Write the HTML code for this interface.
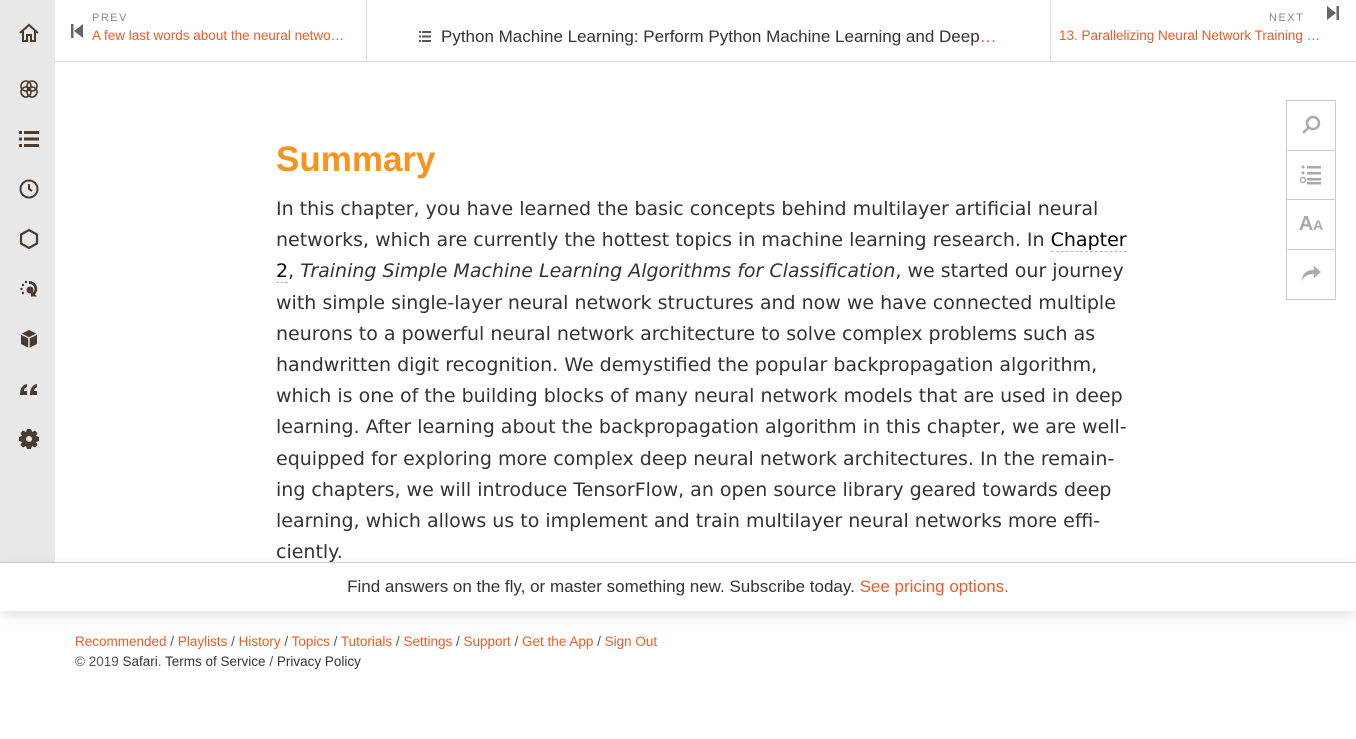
<!DOCTYPE html>
<html><head><meta charset="utf-8"><style>
*{margin:0;padding:0;box-sizing:border-box}
body{width:1356px;height:739px;overflow:hidden;background:#fff;font-family:"Liberation Sans",sans-serif;position:relative}
.side{position:absolute;left:0;top:0;width:55px;height:562px;background:#e8e8e8}
.side svg{position:absolute;left:18px;width:22px;height:22px}
.top{position:absolute;left:55px;top:0;right:0;height:62px;border-bottom:1px solid #ddd}
.prev{position:absolute;left:0;top:0;width:312px;height:61px;border-right:1px solid #ddd}
.next{position:absolute;right:0;top:0;width:306px;height:61px;border-left:1px solid #ddd}
.lbl{font-size:11px;letter-spacing:1.5px;color:#888}
.lnk{font-size:13.5px;color:#f15a24;white-space:nowrap}
.title{position:absolute;top:27px;font-size:17px;color:#333;white-space:nowrap}
.content{position:absolute;left:276px;top:140px;font-family:"DejaVu Sans",sans-serif;font-size:19px;line-height:31.2px;color:#333;white-space:nowrap}
h1{font-family:"Liberation Sans",sans-serif;font-weight:bold;color:#f7941d;font-size:35px;line-height:40px;margin-bottom:14px}
.tools{position:absolute;left:1286px;top:100px;width:50px;height:200px;border:1px solid #ccc;background:#fff}
.tools div{height:49.5px;border-bottom:1px solid #ccc;display:flex;align-items:center;justify-content:center;color:#aaa}
.tools div:last-child{border:none}
.banner{position:absolute;left:0;top:562px;width:1356px;height:49px;background:#fff;border-top:1px solid #ccc;box-shadow:0 4px 12px rgba(0,0,0,.12);text-align:center;font-size:17px;line-height:48px;color:#333}
.o{color:#f15a24}
.foot{position:absolute;left:75px;top:632px;font-size:13.5px;line-height:20px;color:#555}
.foot .o{color:#f15a24}
</style></head><body>
<div class="side">
<svg style="top:22px" viewBox="0 0 22 22" fill="none" stroke="#4a3b30" stroke-width="2"><path d="M2 11L11 3l9 8M5 9v10h4v-6h4v6h4V9"/></svg>
<svg style="top:78px" viewBox="0 0 22 22" fill="none" stroke="#4a3b30" stroke-width="1.6"><circle cx="8" cy="8" r="5"/><circle cx="14" cy="8" r="5"/><circle cx="8" cy="14" r="5"/><circle cx="14" cy="14" r="5"/></svg>
<svg style="top:128px" viewBox="0 0 22 22" fill="#4a3b30"><rect x="1" y="3" width="3" height="3"/><rect x="6" y="3" width="15" height="3"/><rect x="1" y="9.5" width="3" height="3"/><rect x="6" y="9.5" width="15" height="3"/><rect x="1" y="16" width="3" height="3"/><rect x="6" y="16" width="15" height="3"/></svg>
<svg style="top:178px" viewBox="0 0 22 22" fill="none" stroke="#4a3b30" stroke-width="2"><circle cx="11" cy="11" r="8.5"/><path d="M11 6v5l3 2"/></svg>
<svg style="top:228px" viewBox="0 0 22 22" fill="none" stroke="#4a3b30" stroke-width="2.2"><path d="M11 2l8 4.5v9L11 20l-8-4.5v-9z"/></svg>
<svg style="top:278px" viewBox="0 0 22 22" fill="#4a3b30"><circle cx="12" cy="12" r="3.5"/><path d="M11 3a8 8 0 0 1 6 13.5l2 2h-6v-6l2 2A5 5 0 0 0 11 6z"/><circle cx="5" cy="7" r="1.2"/><circle cx="3.5" cy="11" r="1.2"/><circle cx="5" cy="15" r="1.2"/><circle cx="8" cy="4" r="1.2"/></svg>
<svg style="top:328px" viewBox="0 0 22 22" fill="#4a3b30"><path d="M11 2l8 4v10l-8 4-8-4V6z"/><path d="M3 6l8 4 8-4M11 10v10" stroke="#e8e8e8" stroke-width="1.5" fill="none"/></svg>
<svg style="top:378px" viewBox="0 0 22 22" fill="#4a3b30"><path d="M2 17c0-6 2-10 7-11v3c-2 1-3 2-3 4h3v4zM12 17c0-6 2-10 7-11v3c-2 1-3 2-3 4h3v4z"/></svg>
<svg style="top:428px" viewBox="0 0 22 22" fill="#4a3b30"><path d="M9 1h4l1 3 3-1.5 2.5 2.5L18 8l3 1v4l-3 1 1.5 3-2.5 2.5L14 18l-1 3H9l-1-3-3 1.5L2.5 17 4 14l-3-1V9l3-1-1.5-3L5 2.5 8 4z"/><circle cx="11" cy="11" r="3" fill="#e8e8e8"/></svg>
</div>
<div class="top">
<div class="prev">
<svg style="position:absolute;left:16px;top:24px" width="12" height="14" viewBox="0 0 12 14" fill="#666"><rect x="0" y="0" width="2.5" height="14"/><path d="M12 0v14L3 7z"/></svg>
<div class="lbl" style="position:absolute;left:37px;top:12px">PREV</div>
<div class="lnk" style="position:absolute;left:37px;top:28px">A few last words about the neural netwo…</div>
</div>
<svg style="position:absolute;left:364px;top:31px" width="12" height="11" viewBox="0 0 12 11" fill="#555"><rect x="0" y="0" width="2" height="2"/><rect x="3" y="0" width="9" height="2"/><rect x="0" y="4.5" width="2" height="2"/><rect x="3" y="4.5" width="9" height="2"/><rect x="0" y="9" width="2" height="2"/><rect x="3" y="9" width="9" height="2"/></svg>
<div class="title" style="left:386px">Python Machine Learning: Perform Python Machine Learning and Deep<span class="o">…</span></div>
<div class="next">
<div class="lbl" style="position:absolute;left:218px;top:12px">NEXT</div>
<div class="lnk" style="position:absolute;left:8px;top:28px">13. Parallelizing Neural Network Training …</div>
<svg style="position:absolute;left:276px;top:6px" width="12" height="14" viewBox="0 0 12 14" fill="#666"><path d="M0 0v14l9-7z"/><rect x="9.5" y="0" width="2.5" height="14"/></svg>
</div>
</div>
<div class="content">
<h1>Summary</h1>
In this chapter, you have learned the basic concepts behind multilayer artificial neural<br>
networks, which are currently the hottest topics in machine learning research. In <span style="color:#000;border-bottom:1px dashed #bbb">Chapter</span><br>
<span style="color:#000;border-bottom:1px dashed #bbb">2</span>, <i>Training Simple Machine Learning Algorithms for Classification</i>, we started our journey<br>
with simple single-layer neural network structures and now we have connected multiple<br>
neurons to a powerful neural network architecture to solve complex problems such as<br>
handwritten digit recognition. We demystified the popular backpropagation algorithm,<br>
which is one of the building blocks of many neural network models that are used in deep<br>
learning. After learning about the backpropagation algorithm in this chapter, we are well-<br>
equipped for exploring more complex deep neural network architectures. In the remain-<br>
ing chapters, we will introduce TensorFlow, an open source library geared towards deep<br>
learning, which allows us to implement and train multilayer neural networks more effi-<br>
ciently.
</div>
<div class="tools">
<div><svg width="22" height="22" viewBox="0 0 22 22" fill="none" stroke="#aaa" stroke-width="2.5"><circle cx="13" cy="9" r="6"/><path d="M9 13l-6 6"/></svg></div>
<div><svg width="22" height="20" viewBox="0 0 22 20" fill="#aaa"><circle cx="3" cy="2" r="1.5"/><rect x="7" y="1" width="14" height="2.5"/><circle cx="3" cy="8" r="1.5"/><rect x="7" y="7" width="14" height="2.5"/><circle cx="3" cy="15" r="2.5" fill="none" stroke="#aaa" stroke-width="1.5"/><rect x="7" y="13" width="14" height="2.5"/><rect x="7" y="17" width="14" height="2.5"/></svg></div>
<div><span style="font-weight:bold;font-size:20px;color:#aaa">A<span style="font-size:14px">A</span></span></div>
<div><svg width="22" height="18" viewBox="0 0 22 18" fill="#aaa"><path d="M14 1l7 6-7 6V9C8 9 4 11 2 16c0-7 4-11 12-11z"/></svg></div>
</div>
<div class="banner">Find answers on the fly, or master something new. Subscribe today. <span class="o">See pricing options.</span></div>
<div class="foot">
<div><span class="o">Recommended</span> / <span class="o">Playlists</span> / <span class="o">History</span> / <span class="o">Topics</span> / <span class="o">Tutorials</span> / <span class="o">Settings</span> / <span class="o">Support</span> / <span class="o">Get the App</span> / <span class="o">Sign Out</span></div>
<div>© 2019 <span style="color:#333">Safari</span>. <span style="color:#333">Terms of Service</span> / <span style="color:#333">Privacy Policy</span></div>
</div>
</body></html>
